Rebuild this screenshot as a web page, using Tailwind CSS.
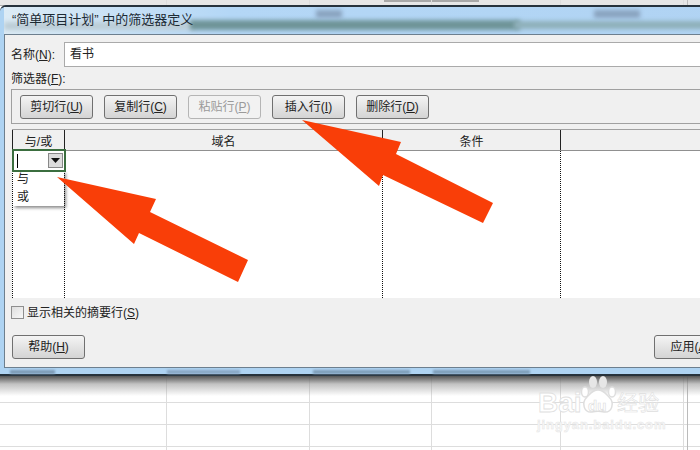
<!DOCTYPE html>
<html lang="zh-CN">
<head>
    <meta charset="UTF-8">
    <title>筛选器定义</title>
    <script src="https://cdn.jsdelivr.net/npm/@tailwindcss/browser@4"></script>
</head>
<body class="bg-white">
    <div class="relative w-[700px] h-[450px] overflow-hidden bg-white text-[12px] leading-[16px] text-[#222] font-['Liberation_Sans','Noto_Sans_CJK_SC',sans-serif]">

        <!-- worksheet behind the dialog -->
        <div class="absolute inset-0 flex flex-col">
            <div class="relative h-[6px] bg-[#e6e6e6] border-b border-[#aaa]">
                <div class="absolute left-[384px] top-0 w-[95px] h-[2px] bg-[#a8a8a8]"></div>
            </div>
            <div class="h-[397px] border-b border-[#ddd]"></div>
            <div class="h-[22px] border-b border-[#ddd]"></div>
            <div class="h-[22px] border-b border-[#ddd]"></div>
        </div>
        <div class="absolute inset-0 flex">
            <div class="w-[167px] border-r border-[#ddd]"></div>
            <div class="w-[143px] border-r border-[#ddd]"></div>
            <div class="w-[122px] border-r border-[#ddd]"></div>
            <div class="w-[129px] border-r border-[#ddd]"></div>
            <div class="w-[123px] border-r border-[#ddd]"></div>
            <div class="w-[4px] border-r border-[#bbb]"></div>
        </div>

        <!-- dialog shadow -->
        <div class="absolute left-0 top-[376px] w-full h-[20px] bg-gradient-to-b from-[#555] via-[#999]/60 via-40% to-transparent"></div>

        <!-- dialog -->
        <div class="absolute left-0 top-[5px] w-[760px] h-[371px] flex flex-col rounded-tl-[6px] border-t-2 border-b-2 border-[#26323c] bg-[#aed3f2] px-[4px] pb-[6px]">
            <div class="relative h-[27px] shrink-0 overflow-hidden bg-gradient-to-r from-[#dcebf5] via-[#b4d7f6] via-30% to-[#b0d3f3]">
                <div class="absolute left-[0px] top-[15px] w-[190px] h-[8px] bg-[#bccdd6] blur-[2px]"></div>
                <div class="absolute left-[186px] top-[13px] w-[330px] h-[10px] bg-[#6f9498] blur-[2px]"></div>
                <div class="absolute left-[510px] top-[14px] w-[260px] h-[8px] bg-[#8fb0ba] blur-[2px]"></div>
                <div class="absolute left-[312px] top-[3px] w-[26px] h-[8px] bg-[#8aa3bf] blur-[2px]"></div>
                <div class="absolute left-[590px] top-[3px] w-[46px] h-[8px] bg-[#8aa3bf] blur-[2px]"></div>
                <div class="relative pl-[8px] pt-[5px] text-[13px] text-[#1c2a33]">“简单项目计划” 中的筛选器定义</div>
            </div>

            <div class="flex-1 flex flex-col min-h-0 bg-[#f0f0f0] border border-[#6d7f8e] pl-[6px] pr-[28px]">
                <div class="flex items-center mt-[7px] h-[25px] gap-[7px]">
                    <label class="w-[46px] shrink-0 whitespace-nowrap">名称(<u>N</u>):</label>
                    <div class="flex-1 h-[25px] bg-white border border-[#aaa] pl-[5px] leading-[22px]">看书</div>
                </div>
                <div class="mt-[4px] h-[16px]">筛选器(<u>F</u>):</div>

                <div class="mt-[2px] h-[35px] shrink-0 flex items-center gap-[11px] border border-[#a0a0a0] pl-[8px] -mr-[28px]">
                    <button class="w-[73px] h-[24px] rounded-[3px] border border-[#707070] bg-gradient-to-b from-[#f4f4f4] to-[#d4d4d4]">剪切行(<u>U</u>)</button>
                    <button class="w-[73px] h-[24px] rounded-[3px] border border-[#707070] bg-gradient-to-b from-[#f4f4f4] to-[#d4d4d4]">复制行(<u>C</u>)</button>
                    <button class="w-[73px] h-[24px] rounded-[3px] border border-[#b5b5b5] bg-[#f2f2f2] text-[#9a9a9a]">粘贴行(<u>P</u>)</button>
                    <button class="w-[73px] h-[24px] rounded-[3px] border border-[#707070] bg-gradient-to-b from-[#f4f4f4] to-[#d4d4d4]">插入行(<u>I</u>)</button>
                    <button class="w-[73px] h-[24px] rounded-[3px] border border-[#707070] bg-gradient-to-b from-[#f4f4f4] to-[#d4d4d4]">删除行(<u>D</u>)</button>
                </div>

                <!-- filter grid -->
                <div class="relative mt-[5px] h-[169px] shrink-0 flex flex-col border-t border-[#a0a0a0] ml-[1px] -mr-[28px]">
                    <div class="flex h-[21px] border-b border-[#909090]">
                        <div class="w-[52px] border-l border-[#222] text-center pt-[5px] leading-[15px]">与/或</div>
                        <div class="w-[318px] border-l border-[#222] text-center pt-[5px] leading-[15px]">域名</div>
                        <div class="w-[178px] border-l border-[#222] text-center pt-[5px] leading-[15px]">条件</div>
                        <div class="flex-1 border-l border-[#222]"></div>
                    </div>
                    <div class="flex flex-1 bg-white">
                        <div class="w-[52px] border-l border-dotted border-[#111]"></div>
                        <div class="w-[318px] border-l border-dotted border-[#111]"></div>
                        <div class="w-[178px] border-l border-dotted border-[#111]"></div>
                        <div class="flex-1 border-l border-dotted border-[#111]"></div>
                    </div>

                    <!-- and/or dropdown -->
                    <div class="absolute left-[1px] top-[41px] w-[51px] h-[35px] bg-white shadow-[2px_2px_3px_rgba(0,0,0,0.45)] pl-[4px] leading-[18px]">
                        <div class="-mt-[2px] pt-[1px]">与</div>
                        <div>或</div>
                    </div>
                    <div class="absolute left-0 top-[19px] w-[54px] h-[23px] flex items-center justify-between border-2 border-[#3b6e3f] bg-white pl-[3px] pr-[1px]">
                        <div class="w-px h-[14px] bg-black"></div>
                        <div class="w-[15px] h-[15px] flex items-center justify-center border border-[#888] bg-[#dcdcdc]">
                            <svg width="9" height="5" viewBox="0 0 9 5"><path d="M0 0h9L4.500 5z" fill="#111"/></svg>
                        </div>
                    </div>
                </div>

                <label class="flex items-center gap-[3px] mt-[8px] h-[13px] shrink-0">
                    <span class="w-[13px] h-[13px] border border-[#8e8e8e] bg-gradient-to-br from-[#dedede] to-[#f8f8f8]"></span>
                    <span>显示相关的摘要行(<u>S</u>)</span>
                </label>

                <div class="flex justify-between mt-[16px] ml-[1px]">
                    <button class="w-[73px] h-[24px] rounded-[3px] border border-[#707070] bg-gradient-to-b from-[#f4f4f4] to-[#d4d4d4]">帮助(<u>H</u>)</button>
                    <button class="w-[73px] h-[24px] rounded-[3px] border border-[#707070] bg-gradient-to-b from-[#f4f4f4] to-[#d4d4d4]">应用(<u>A</u>)</button>
                </div>
            </div>
        </div>

        <!-- patches in the glass frame under the client area -->
        <div class="absolute left-[10px] top-[370px] w-[45px] h-[4px] bg-[#7d9ab5] blur-[1px]"></div>
        <div class="absolute left-[167px] top-[370px] w-[73px] h-[4px] bg-[#8aa7c4] blur-[1px]"></div>
        <div class="absolute left-[313px] top-[370px] w-[97px] h-[4px] bg-[#7f9db8] blur-[1px]"></div>
        <div class="absolute left-[433px] top-[370px] w-[97px] h-[4px] bg-[#7f9db8] blur-[1px]"></div>

        <!-- red arrows -->
        <svg class="absolute inset-0" width="700" height="450" viewBox="0 0 700 450">
            <polygon points="57,177 156,199 150,212 248,260 238,282 139,233 134,244" fill="#f93e08"/>
            <polygon points="302,120 401,142 396,154 493,203 483,223 383,175 379,186" fill="#f93e08"/>
        </svg>

        <!-- watermark -->
        <div class="absolute left-[536px] top-[375px] w-[130px] h-[60px]">
            <svg class="absolute left-[46px] top-[2px] overflow-visible" width="36" height="40" viewBox="0 0 36 40" fill="none" stroke="#dedede" stroke-width="1.500">
                <ellipse cx="11" cy="5" rx="4" ry="6" fill="#e6e6e6" stroke="none"/>
                <ellipse cx="21" cy="5" rx="4" ry="6" fill="#e6e6e6" stroke="none"/>
                <ellipse cx="3" cy="15" rx="3.500" ry="5" fill="#fff"/>
                <ellipse cx="30" cy="15" rx="3.500" ry="5" fill="#fff"/>
                <path d="M16 13c5 0 7 3 11 7 6 6 3 16-5 15-4-1-8-1-12 0-8 1-11-9-5-15 4-4 6-7 11-7z" fill="#fff"/>
            </svg>
            <div class="absolute left-[2px] top-[12px] whitespace-nowrap text-[28px] leading-[32px] font-bold text-white [-webkit-text-stroke:0.8px_#e0e0e0]">Bai</div>
            <div class="absolute left-[52px] top-[22px] text-[15px] leading-[18px] font-bold text-white [-webkit-text-stroke:0.6px_#dcdcdc]">du</div>
            <div class="absolute left-[81px] top-[14px] whitespace-nowrap text-[21px] leading-[28px] text-white [-webkit-text-stroke:0.6px_#dedede]">经验</div>
            <div class="absolute left-[1px] top-[42px] whitespace-nowrap text-[13px] leading-[16px] tracking-[0.9px] font-bold text-[#f8f8f8] [-webkit-text-stroke:0.5px_#e6e6e6]">jingyan.baidu.com</div>
        </div>
    </div>
</body>
</html>
